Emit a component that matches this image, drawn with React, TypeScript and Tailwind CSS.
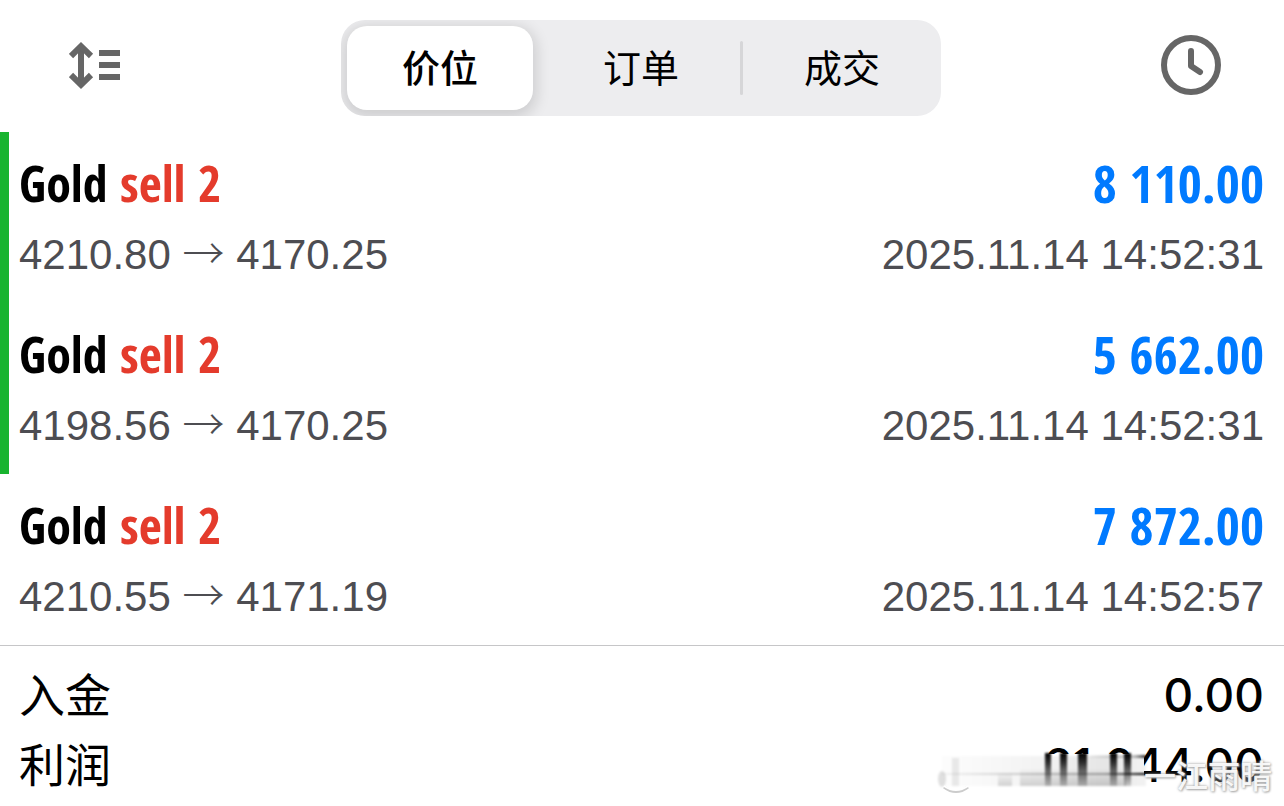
import React, { useState } from 'react';

const tabs = ['价位', '订单', '成交'];

const deals = [
  { symbol: 'Gold', side: 'sell 2', open: '4210.80', close: '4170.25', profit: '8 110.00', time: '2025.11.14 14:52:31', marked: true },
  { symbol: 'Gold', side: 'sell 2', open: '4198.56', close: '4170.25', profit: '5 662.00', time: '2025.11.14 14:52:31', marked: true },
  { symbol: 'Gold', side: 'sell 2', open: '4210.55', close: '4171.19', profit: '7 872.00', time: '2025.11.14 14:52:57', marked: false },
];

const SortIcon = () => (
  <svg viewBox="0 0 52 48" className="w-[52px] h-12" fill="none" stroke="#666" strokeWidth="6" aria-hidden="true">
    <path d="M12 4V43" />
    <path d="M2 14L12 4.200L22 14M2 33L12 42.8L22 33" />
    <path d="M30 11H51M30 23H51M30 35H51" />
  </svg>
);

const ClockIcon = () => (
  <svg viewBox="0 0 60 60" className="size-[60px]" fill="none" stroke="#666" strokeWidth="6" aria-hidden="true">
    <circle cx="30" cy="30" r="27" />
    <path d="M30 16V31L39 37" strokeLinecap="round" strokeLinejoin="round" />
  </svg>
);

// Vertical streaks that hide the lower half of the leading digits
const Smear = () => (
  <svg viewBox="0 0 348 50" className="absolute top-[18px] -right-3.5 w-[348px] h-[50px]" aria-hidden="true">
    <defs>
      <linearGradient id="streak" x1="0" y1="0" x2="0" y2="1">
        <stop offset="0" stopColor="#000" />
        <stop offset="0.3" stopColor="#000" stopOpacity="0.8" />
        <stop offset="1" stopColor="#000" stopOpacity="0.15" />
      </linearGradient>
      <linearGradient id="haze" x1="0" y1="0" x2="1" y2="0">
        <stop offset="0" stopColor="#000" stopOpacity="0.01" />
        <stop offset="0.5" stopColor="#000" stopOpacity="0.05" />
        <stop offset="0.8" stopColor="#000" stopOpacity="0.1" />
        <stop offset="1" stopColor="#000" stopOpacity="0.05" />
      </linearGradient>
      <linearGradient id="floor" x1="0" y1="0" x2="0" y2="1">
        <stop offset="0" stopColor="#000" stopOpacity="0" />
        <stop offset="1" stopColor="#000" stopOpacity="0.15" />
      </linearGradient>
      <linearGradient id="line" x1="0" y1="0" x2="1" y2="0">
        <stop offset="0" stopColor="#000" stopOpacity="0.04" />
        <stop offset="0.8" stopColor="#000" stopOpacity="0.3" />
        <stop offset="1" stopColor="#000" />
      </linearGradient>
      <filter id="soft" x="-20%" y="-20%" width="140%" height="140%">
        <feGaussianBlur stdDeviation="1.2 0.8" />
      </filter>
    </defs>
    <rect x="0" y="6" width="214" height="44" fill="#fff" />
    <g filter="url(#soft)">
      <rect x="12" y="8" width="204" height="30" fill="url(#haze)" />
      <rect x="90" y="20" width="106" height="18" fill="url(#floor)" />
      <rect x="68" y="24" width="14" height="14" fill="url(#floor)" />
      <rect x="22" y="10" width="7" height="28" fill="#000" opacity="0.08" />
      <ellipse cx="12" cy="31" rx="4" ry="8" fill="#000" opacity="0.12" />
      <rect x="115" y="5" width="6" height="33" fill="url(#streak)" />
      <rect x="130" y="5" width="7" height="33" fill="url(#streak)" />
      <rect x="148" y="5" width="9" height="33" fill="url(#streak)" />
      <rect x="180" y="5" width="7" height="33" fill="url(#streak)" />
      <rect x="194" y="5" width="7" height="33" fill="url(#streak)" />
      <rect x="160" y="7" width="56" height="3" fill="url(#line)" opacity="0.8" />
      <rect x="12" y="25" width="204" height="2" fill="url(#line)" />
    </g>
    <path d="M14 39Q26 48 38 39" fill="none" stroke="#ccc" strokeWidth="3" />
    <path d="M14 38Q26 46 38 38" fill="none" stroke="#fff" strokeWidth="2" />
  </svg>
);

const Header = () => {
  const [active, setActive] = useState(0);

  return (
    <header className="flex items-start justify-between pt-5 pl-[69px] pr-[63px] pb-4">
      <button type="button" aria-label="排序" className="mt-[22px]">
        <SortIcon />
      </button>
      <div className="flex items-center gap-1.5 w-[600px] h-24 p-1.5 rounded-3xl bg-[#ededef] overflow-hidden">
        {tabs.map((tab, i) => (
          <React.Fragment key={tab}>
            {i > 0 && (
              <span className={`w-[3px] h-[54px] rounded-full ${i === active || i - 1 === active ? 'bg-transparent' : 'bg-[#d6d6d8]'}`} />
            )}
            <button
              type="button"
              onClick={() => setActive(i)}
              className={`flex-1 h-full text-[38px] ${
                i === active ? 'rounded-[20px] bg-white font-medium shadow-[0_4px_14px_4px_rgba(0,0,0,0.13)]' : ''
              }`}
            >
              {tab}
            </button>
          </React.Fragment>
        ))}
      </div>
      <button type="button" aria-label="历史" className="mt-[15px]">
        <ClockIcon />
      </button>
    </header>
  );
};

const App = () => {
  return (
    <main className="bg-white text-black overflow-hidden font-[Inter,'Noto_Sans_CJK_SC',sans-serif]">
      <Header />

      <ul>
        {deals.map((deal, i) => (
          <li
            key={i}
            className={`flex justify-between h-[171px] pt-5 pr-5 border-l-[9px] pl-2.5 ${deal.marked ? 'border-[#18b42f]' : 'border-transparent'}`}
          >
            <div>
              <div className="font-['Open_Sans_Condensed','Roboto_Condensed',sans-serif] font-semibold text-[50px] leading-[62px]">
                {deal.symbol} <span className="text-[#e43b2c]">{deal.side}</span>
              </div>
              <div className="font-['Liberation_Sans',sans-serif] text-[42px] leading-[82px] text-[#4d4d52]">
                {deal.open} <span className="font-['Noto_Sans_CJK_SC',sans-serif] leading-none font-light">→</span> {deal.close}
              </div>
            </div>
            <div className="text-right">
              <div className="font-['Open_Sans_Condensed','Roboto_Condensed',sans-serif] font-semibold text-[52px] leading-[62px] text-[#007aff]">
                {deal.profit}
              </div>
              <div className="font-['Liberation_Sans',sans-serif] text-[42px] leading-[82px] text-[#4d4d52]">{deal.time}</div>
            </div>
          </li>
        ))}
      </ul>

      <dl className="border-t border-[#c6c6c8] pl-[19px] pr-5 pt-3.5 text-[46px] leading-[70px]">
        <div className="flex justify-between">
          <dt>入金</dt>
          <dd className="font-medium">0.00</dd>
        </div>
        <div className="flex justify-between">
          <dt>利润</dt>
          <dd className="relative font-medium">
            21 644.00
            <Smear />
            <span className="absolute top-7 -right-2 whitespace-nowrap font-['Noto_Sans_CJK_SC',sans-serif] text-[32px] leading-8 text-white/90 [text-shadow:0_0_3px_#999,1px_1px_2px_#bbb]">
              一江雨晴
            </span>
          </dd>
        </div>
      </dl>
    </main>
  );
};

export default App;
